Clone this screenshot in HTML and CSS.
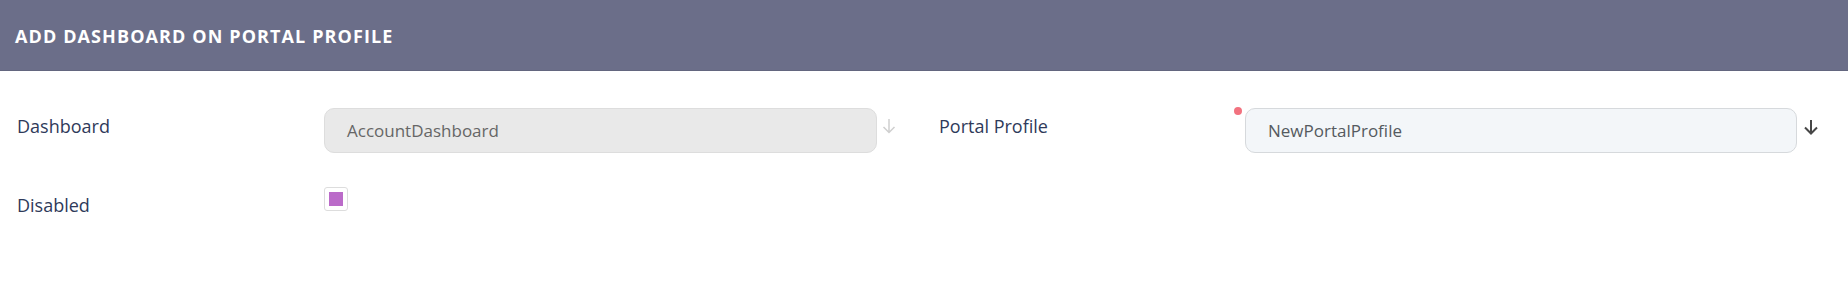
FILE: index.html
```html
<!DOCTYPE html>
<html>
<head>
<meta charset="utf-8">
<link rel="stylesheet" href="styles.css">
</head>
<body>
<div class="header">
  <h1 class="title">ADD DASHBOARD ON PORTAL PROFILE</h1>
</div>
<div class="form">
  <div class="row">
    <div class="field field-left">
      <div class="label">Dashboard</div>
      <div class="control">
        <div class="input input-disabled">AccountDashboard</div>
      </div>
      <span class="arrow arrow-light">
        <svg width="14" height="16" viewBox="0 0 14 16"><path d="M7 1 V14.5 M1.5 9 L7 14.5 L12.5 9" fill="none" stroke="#cfcfcf" stroke-width="1.5"/></svg>
      </span>
    </div>
    <div class="field field-right">
      <div class="label label-right">Portal Profile</div>
      <div class="control">
        <span class="required"></span>
        <div class="input input-active">NewPortalProfile</div>
      </div>
      <span class="arrow arrow-dark">
        <svg width="16" height="16" viewBox="0 0 16 16"><path d="M8 1 V14.5 M2 8.5 L8 14.5 L14 8.5" fill="none" stroke="#474747" stroke-width="2"/></svg>
      </span>
    </div>
  </div>
  <div class="row row-check">
    <div class="field field-left">
      <div class="label">Disabled</div>
      <div class="checkbox"><span class="check-fill"></span></div>
    </div>
  </div>
</div>
</body>
</html>
```
FILE: styles.css
```css
html, body {
  margin: 0;
  padding: 0;
  background: #ffffff;
  font-family: "Open Sans", "Noto Sans", sans-serif;
}
.header {
  height: 71px;
  background: #6b6e89;
  border-bottom: 1px solid #63667f;
  box-sizing: border-box;
  display: flex;
  align-items: center;
  padding-left: 15px;
}
.title {
  margin: 0;
  padding-top: 1px;
  font-size: 18px;
  font-weight: 700;
  color: #ffffff;
  letter-spacing: 1.1px;
}
.form {
  padding: 37px 0 0 17px;
}
.row {
  display: flex;
  align-items: flex-start;
}
.row-check {
  margin-top: 34px;
}
.field {
  display: flex;
  align-items: flex-start;
}
.field-left {
  width: 922px;
}
.label {
  width: 307px;
  flex: none;
  padding-top: 6px;
  font-size: 18px;
  color: #2f3a5a;
}
.label-right {
  width: 306px;
}
.field-left .control {
  width: 553px;
}
.field-right .control {
  width: 552px;
}
.control {
  position: relative;
  flex: none;
}
.input {
  height: 45px;
  box-sizing: border-box;
  border: 1px solid #dcdcdc;
  border-radius: 10px;
  padding-left: 22px;
  font-size: 17px;
  line-height: 43px;
  color: #666666;
}
.input-disabled {
  background: #e9e9e9;
  border-color: #dddddd;
}
.input-active {
  background: #f3f6f9;
  border-color: #d6d9dc;
  color: #555a60;
}
.required {
  position: absolute;
  left: -11px;
  top: -1px;
  width: 8px;
  height: 8px;
  border-radius: 50%;
  background: #f2727f;
}
.arrow {
  display: flex;
  margin-top: 10px;
}
.arrow-light {
  margin-left: 5px;
}
.arrow-dark {
  margin-left: 6px;
  margin-top: 11px;
}
.checkbox {
  width: 24px;
  height: 24px;
  box-sizing: border-box;
  border: 1px solid #dddddd;
  border-radius: 3px;
  padding: 4px;
  background: #ffffff;
}
.check-fill {
  display: block;
  width: 14px;
  height: 14px;
  background: #bb6bc9;
}
```
